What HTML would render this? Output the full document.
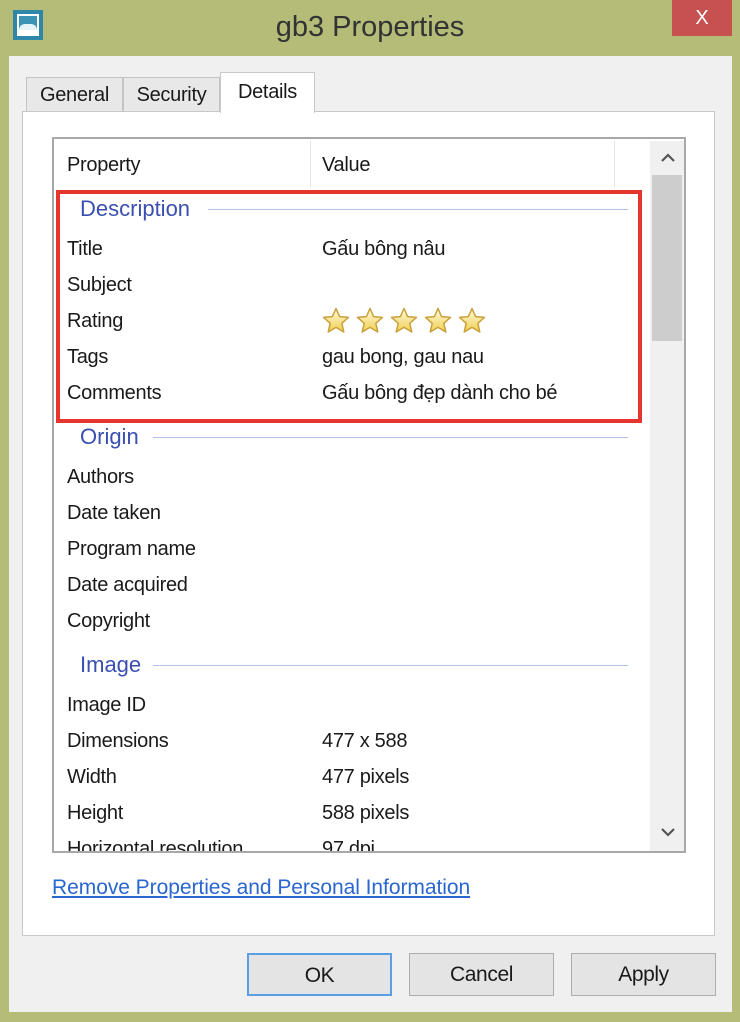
<!DOCTYPE html>
<html><head><meta charset="utf-8"><style>
*{margin:0;padding:0;box-sizing:border-box}
body{width:740px;height:1022px;background:#b4bc78;position:relative;overflow:hidden;font-family:"Liberation Sans",sans-serif;color:#1a1a1a}
.a{position:absolute}
.t{font-size:20px;letter-spacing:-0.3px;white-space:nowrap;line-height:24px}
.g{color:#3a4fb0;font-size:22px;letter-spacing:0}
.ln{height:1px;background:#b4bfe8}
.btn{position:absolute;top:953px;height:43px;width:145px;background:#e4e4e4;border:1px solid #adadad;font-size:21px;text-align:center;line-height:41px;letter-spacing:-0.4px}
</style></head><body>
<div class="a" style="left:13px;top:10px;width:30px;height:30px;background:#2e86a8;"></div>
<div class="a" style="left:17px;top:14px;width:22px;height:22px;background:#fff;"></div>
<div class="a" style="left:19px;top:16px;width:18px;height:14px;background:#3c93b6;"></div>
<div class="a" style="left:19px;top:24px;width:18px;height:6px;background:#e8f3f8;border-radius:6px 6px 0 0"></div>
<div class="a t" style="left:0;width:740px;top:10px;text-align:center;font-size:29px;line-height:34px;color:#333;letter-spacing:0">gb3 Properties</div>
<div class="a" style="left:672px;top:0;width:60px;height:36px;background:#c75050;color:#fff;font-size:20px;text-align:center;line-height:36px">X</div>
<div class="a" style="left:9px;top:56px;width:723px;height:956px;background:#f0f0f0"></div>
<div class="a t" style="left:26px;top:77px;width:97px;height:35px;background:#e8e8e8;border:1px solid #c4c4c4;border-bottom:none;text-align:center;line-height:34px">General</div>
<div class="a t" style="left:123px;top:77px;width:97px;height:35px;background:#e8e8e8;border:1px solid #c4c4c4;border-bottom:none;text-align:center;line-height:34px">Security</div>
<div class="a" style="left:22px;top:111px;width:693px;height:825px;background:#fff;border:1px solid #c8c8c8"></div>
<div class="a t" style="left:220px;top:72px;width:95px;height:41px;background:#fff;border:1px solid #c8c8c8;border-bottom:none;text-align:center;line-height:38px">Details</div>
<div class="a" style="left:52px;top:137px;width:634px;height:716px;border:2px solid #a8a8a8;background:#fff;overflow:hidden">
 <div class="a" style="left:256px;top:2px;width:1px;height:46px;background:#e5e5e5"></div>
 <div class="a" style="left:560px;top:2px;width:1px;height:46px;background:#e5e5e5"></div>
 <div class="a" style="left:596px;top:2px;width:34px;height:710px;background:#f0f0f0"></div>
 <div class="a" style="left:598px;top:36px;width:30px;height:166px;background:#cdcdcd"></div>
 <svg class="a" style="left:604px;top:12px" width="20" height="14"><path d="M4 10 L10 4 L16 10" stroke="#555" stroke-width="2.2" fill="none"/></svg>
 <svg class="a" style="left:604px;top:686px" width="20" height="14"><path d="M4 4 L10 10 L16 4" stroke="#555" stroke-width="2.2" fill="none"/></svg>
</div>
<div class="a t" style="left:67px;top:153px">Property</div>
<div class="a t" style="left:322px;top:153px">Value</div>
<div class="a" style="left:56px;top:190px;width:586px;height:233px;border:4px solid #e5352c"></div>
<div class="a t g" style="left:80px;top:197px">Description</div><div class="a ln" style="left:208px;top:209px;width:420px"></div>
<div class="a t" style="left:67px;top:237px">Title</div><div class="a t" style="left:322px;top:237px">Gấu bông nâu</div>
<div class="a t" style="left:67px;top:273px">Subject</div>
<div class="a t" style="left:67px;top:309px">Rating</div>
<svg class="a" style="left:322px;top:307px" width="170" height="30">
<defs><linearGradient id="s" x1="0" y1="0" x2="0" y2="1"><stop offset="0" stop-color="#fffbe0"/><stop offset="1" stop-color="#f0cf50"/></linearGradient>
<path id="st" d="M14 1.5 L17.6 9.6 L26.4 10.4 L19.8 16.3 L21.8 25 L14 20.4 L6.2 25 L8.2 16.3 L1.6 10.4 L10.4 9.6 Z" fill="url(#s)" stroke="#c9a03a" stroke-width="1.5" stroke-linejoin="round"/></defs>
<use href="#st" x="0"/><use href="#st" x="34"/><use href="#st" x="68"/><use href="#st" x="102"/><use href="#st" x="136"/>
</svg>
<div class="a t" style="left:67px;top:345px">Tags</div><div class="a t" style="left:322px;top:345px">gau bong, gau nau</div>
<div class="a t" style="left:67px;top:381px">Comments</div><div class="a t" style="left:322px;top:381px">Gấu bông đẹp dành cho bé</div>
<div class="a t g" style="left:80px;top:425px">Origin</div><div class="a ln" style="left:153px;top:437px;width:475px"></div>
<div class="a t" style="left:67px;top:465px">Authors</div>
<div class="a t" style="left:67px;top:501px">Date taken</div>
<div class="a t" style="left:67px;top:537px">Program name</div>
<div class="a t" style="left:67px;top:573px">Date acquired</div>
<div class="a t" style="left:67px;top:609px">Copyright</div>
<div class="a t g" style="left:80px;top:653px">Image</div><div class="a ln" style="left:153px;top:665px;width:475px"></div>
<div class="a t" style="left:67px;top:693px">Image ID</div>
<div class="a t" style="left:67px;top:729px">Dimensions</div><div class="a t" style="left:322px;top:729px">477 x 588</div>
<div class="a t" style="left:67px;top:765px">Width</div><div class="a t" style="left:322px;top:765px">477 pixels</div>
<div class="a t" style="left:67px;top:801px">Height</div><div class="a t" style="left:322px;top:801px">588 pixels</div>
<div class="a" style="left:54px;top:836px;width:594px;height:15px;overflow:hidden"><div class="a t" style="left:13px;top:1px">Horizontal resolution</div><div class="a t" style="left:268px;top:1px">97 dpi</div></div>
<div class="a t" style="left:52px;top:876px;color:#2a66d0;text-decoration:underline;font-size:21px;letter-spacing:-0.05px">Remove Properties and Personal Information</div>
<div class="btn" style="left:247px;border:2px solid #5a9ee6">OK</div>
<div class="btn" style="left:409px">Cancel</div>
<div class="btn" style="left:571px">Apply</div>
</body></html>
